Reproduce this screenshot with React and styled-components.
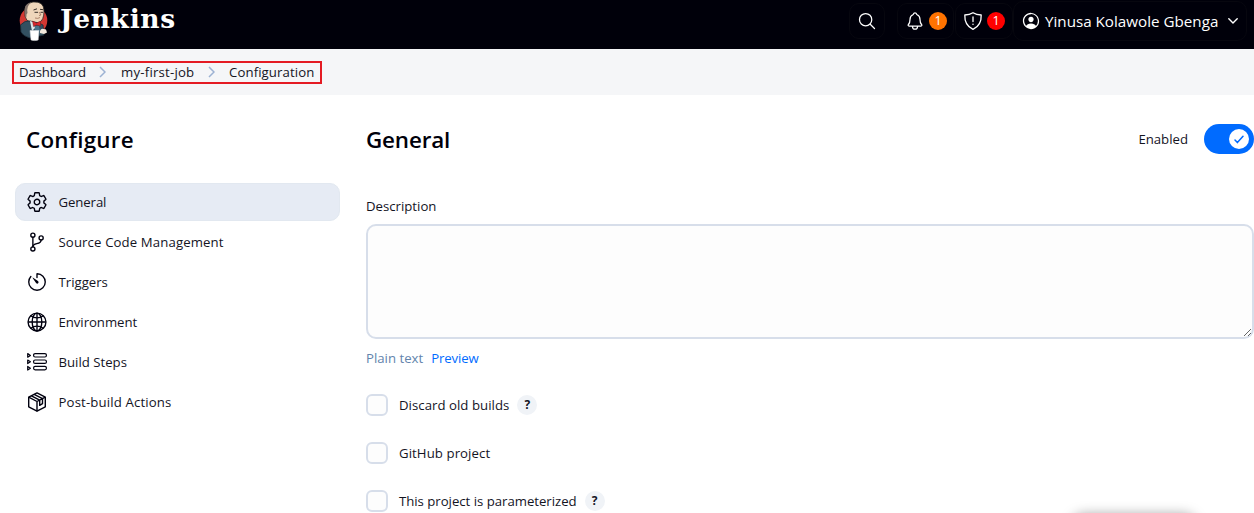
import React from "react";
import styled, { createGlobalStyle } from "styled-components";
import {
  IoSearchOutline,
  IoNotificationsOutline,
  IoPersonCircleOutline,
  IoSettingsOutline,
  IoGitBranchOutline,
  IoTimerOutline,
  IoGlobeOutline,
} from "react-icons/io5";

const GlobalStyle = createGlobalStyle`
  *, *::before, *::after { box-sizing: border-box; }
  body {
    margin: 0;
    background: #fff;
    color: #14141f;
    font-family: "Open Sans", "Noto Sans", sans-serif;
    font-size: 13.2px;
    overflow: hidden;
  }
  svg { display: block; flex: none; }
`;

const Page = styled.div`
  position: relative;
  height: 513px;
  overflow: hidden;
  display: flex;
  flex-direction: column;
`;

const Label = styled.span`
  white-space: nowrap;
  line-height: 20px;
  letter-spacing: ${(p) => p.$track || 0}px;
`;

const Header = styled.header`
  height: 49px;
  flex: none;
  display: flex;
  align-items: flex-start;
  padding-left: 18px;
  background: #00000a;
  color: #fff;
`;

const Brand = styled.div`
  display: flex;
  gap: 11px;
  flex: 1;
`;

const Wordmark = styled.span`
  font-family: "DejaVu Serif", serif;
  font-weight: 700;
  font-size: 26.5px;
  line-height: 38px;
  letter-spacing: ${(p) => p.$track}px;
`;

const HeaderButton = styled.button`
  display: flex;
  align-items: center;
  width: ${(p) => p.$width}px;
  height: ${(p) => p.$height || 36}px;
  margin: ${(p) => p.$margin};
  padding: 0 0 0 ${(p) => p.$pad}px;
  gap: ${(p) => p.$gap || 0}px;
  flex: none;
  border: 1px solid #07070f;
  border-radius: 10px;
  background: transparent;
  color: #fff;
  font: inherit;
`;

const UserName = styled(Label)`
  margin-right: 6px;
  font-size: 15.2px;
`;

const Badge = styled.span`
  width: 18px;
  height: 18px;
  border-radius: 50%;
  background: ${(p) => p.$color};
  color: #fff;
  font-size: 12.5px;
  line-height: 18px;
  text-align: center;
`;

const BreadcrumbBar = styled.nav`
  height: 46px;
  flex: none;
  padding: 12px 0 0 12px;
  background: #f5f6f8;
`;

const Breadcrumbs = styled.div`
  display: flex;
  align-items: center;
  width: 310px;
  height: 23px;
  padding: 0 0 2px 5px;
  border: 2px solid #e41b23;
`;

const Crumb = styled(Label)`
  width: ${(p) => p.$width}px;
`;

const CrumbArrow = styled.svg`
  margin-right: ${(p) => p.$after}px;
`;

const Body = styled.div`
  display: flex;
  flex: 1;
  min-height: 0;
  overflow: hidden;
  padding-left: 15px;
  gap: 26px;
`;

const Sidebar = styled.aside`
  width: 325px;
  flex: none;
`;

const Title = styled.h1`
  margin: 0;
  padding: 1px 0 0 ${(p) => p.$inset || 0}px;
  color: #00000a;
  font-size: 22.4px;
  font-weight: 600;
  line-height: 30px;
  letter-spacing: ${(p) => p.$track || 0}px;
`;

const SidebarHead = styled.div`
  padding-top: 29px;
  height: 88px;
`;

const TaskList = styled.div`
  display: flex;
  flex-direction: column;
  gap: 2px;
`;

const Task = styled.a`
  display: flex;
  align-items: center;
  gap: 10.5px;
  height: 38px;
  padding-left: 10px;
  border-radius: 10px;
  border: 1px solid ${(p) => (p.$active ? "#e2e8f0" : "transparent")};
  background: ${(p) => (p.$active ? "#e6ebf4" : "transparent")};
`;

const TaskIcon = styled.span`
  display: flex;
  align-items: center;
  justify-content: center;
  width: 22px;
  height: 22px;
  color: #00000f;
`;

const Content = styled.main`
  flex: 1;
  min-width: 0;
  display: flex;
  flex-direction: column;
  align-items: stretch;
`;

const ContentHead = styled.div`
  display: flex;
  align-items: center;
  height: 30px;
  flex: none;
  margin-top: 29px;
`;

const EnabledLabel = styled(Label)`
  margin: 0 16px 0 auto;
`;

const Toggle = styled.span`
  display: flex;
  align-items: center;
  justify-content: flex-end;
  width: 50px;
  height: 30px;
  padding-right: 5px;
  border-radius: 15px;
  background: #006bff;
`;

const Knob = styled.span`
  display: flex;
  align-items: center;
  justify-content: center;
  width: 20px;
  height: 20px;
  border-radius: 50%;
  background: #fff;
`;

const FieldLabel = styled(Label)`
  margin-top: 42px;
  margin-bottom: 8px;
`;

const Description = styled.textarea`
  display: block;
  width: 100%;
  height: 115px;
  flex: none;
  border: 2px solid #d7deea;
  border-radius: 10px;
  background: #fdfdfd;
  resize: vertical;
`;

const Formats = styled.div`
  display: flex;
  gap: 8px;
  margin-top: 9px;
  color: #6384ad;
`;

const PreviewLink = styled(Label)`
  color: #006bff;
`;

const Options = styled.div`
  display: flex;
  flex-direction: column;
  gap: 26px;
  margin-top: 26px;
`;

const Option = styled.div`
  display: flex;
  align-items: center;
  height: 22px;
`;

const Checkbox = styled.span`
  width: 22px;
  height: 22px;
  margin-right: 11px;
  border: 2px solid #d7deea;
  border-radius: 6px;
  background: #fdfdfd;
`;

const Help = styled.span`
  width: 20px;
  height: 20px;
  margin-left: 8px;
  border-radius: 50%;
  background: #f0f3f7;
  font-size: 12px;
  font-weight: 700;
  line-height: 20px;
  text-align: center;
`;

const FloatingBar = styled.div`
  position: absolute;
  left: 1073px;
  bottom: -32px;
  width: 122px;
  height: 30px;
  border-radius: 10px;
  box-shadow: 0 0 13px rgba(0, 0, 0, 0.4);
`;

const Butler = () => (
  <svg width="31" height="42" viewBox="0 0 31 42">
    <circle cx="15.5" cy="20.5" r="13.8" fill="#d33833" />
    <path d="M7 16 Q5 3 15 2 Q26 1 26 11 Q26 20 21 23 L12 22 Q8 21 7 16Z" fill="#efd6bb" stroke="#2d2926" strokeWidth=".8" />
    <path d="M7 13 Q5 4 13 2.5 Q8 7 9.5 13 Q8 14 8.5 17 L7 16Z" fill="#81726a" />
    <path d="M15.5 10 l3.5-1.2 M22 9.3 l3 .4 M16.5 12.3 h3.5 M22.5 12.3 h2.5" stroke="#39302b" strokeWidth="1" fill="none" />
    <path d="M21 12 l2 3 -2 .5 M17 18 q3 1 5-.5" stroke="#9c6e58" strokeWidth=".8" fill="none" />
    <path d="M2.5 25 Q7 20 12 21 L21 23 L25 25 L26 35 L12 38 Q5 36 3 32Z" fill="#335061" stroke="#1d2d38" strokeWidth=".8" />
    <path d="M12 21 L15 22 L17 28 L14 31Z" fill="#dfe7eb" />
    <path d="M14.5 21 l4 2 4-2 v5 l-4-1 -3 1.5Z" fill="#d9272e" stroke="#791c20" strokeWidth=".5" />
    <path d="M17 26 l4 0 1 5 -5 0Z" fill="#49728b" />
    <path d="M12 30.5 h9 l-.8 9.5 q-3.5 1.2-7.2 0Z" fill="#fff" stroke="#dadde0" strokeWidth=".5" />
    <path d="M22 31 q1-3 4-2 l2 .5 1 3 -3 1.5 -4-1Z" fill="#f1e7dc" />
  </svg>
);

const ShieldIcon = () => (
  <svg width="20" height="20" viewBox="0 0 20 20" fill="none" stroke="currentColor" strokeWidth="1.3" strokeLinecap="round" strokeLinejoin="round">
    <path d="M10 1.7 C7.5 3.3 4.8 3.9 1.8 4 C1.5 11 4 15.6 10 18.4 C16 15.6 18.5 11 18.2 4 C15.2 3.9 12.5 3.3 10 1.7Z" />
    <path d="M10 6v4.6M10 13.2v.2" />
  </svg>
);

const ChevronDown = () => (
  <svg width="10" height="6" viewBox="0 0 10 6" fill="none" stroke="currentColor" strokeWidth="1.4" strokeLinecap="round" strokeLinejoin="round">
    <path d="M.8.8 5 5 9.2.8" />
  </svg>
);

const StepsIcon = () => (
  <svg width="20" height="20" viewBox="0 0 20 20" fill="none" stroke="currentColor" strokeWidth="1.2" strokeLinejoin="round">
    {[1.6, 8, 14.4].map((y) => (
      <g key={y}>
        <path d={`M.7 ${y} L3.4 ${y + 1.8} L.7 ${y + 3.6}Z`} />
        <rect x="6.6" y={y} width="12.8" height="3.4" rx="1.5" />
      </g>
    ))}
  </svg>
);

const PackageIcon = () => (
  <svg width="20" height="20" viewBox="0 0 20 20" fill="none" stroke="currentColor" strokeWidth="1.4" strokeLinejoin="round">
    <path d="M10 .9 18.3 5.2v9.6L10 19.2 1.7 14.8V5.2Z" />
    <path d="M1.7 5.2 10 9.5l8.3-4.3M10 9.5v9.7M4.4 3.9l8.3 4.2M7.2 2.4l8.3 4.2M12.7 8.2v5.2l2.8-1.7V6.7" />
  </svg>
);

const tasks = [
  { name: "General", icon: <IoSettingsOutline size={22} />, track: -0.1, active: true },
  { name: "Source Code Management", icon: <IoGitBranchOutline size={22} />, track: 0.12 },
  { name: "Triggers", icon: <IoTimerOutline size={22} />, track: 0 },
  { name: "Environment", icon: <IoGlobeOutline size={22} />, track: -0.05 },
  { name: "Build Steps", icon: <StepsIcon />, track: 0 },
  { name: "Post-build Actions", icon: <PackageIcon />, track: 0.14 },
];

const options = [
  { name: "Discard old builds", track: 0.04, help: true },
  { name: "GitHub project", track: 0.08 },
  { name: "This project is parameterized", track: -0.02, help: true },
];

const Separator = ({ after }) => (
  <CrumbArrow $after={after} width="7" height="12" viewBox="0 0 7 12" fill="none" stroke="#9db2d3" strokeWidth="1.5">
    <path d="M1 1l5 5-5 5" />
  </CrumbArrow>
);

export default function App() {
  return (
    <Page>
      <GlobalStyle />
      <Header>
        <Brand>
          <Butler />
          <Wordmark $track={0.65}>Jenkins</Wordmark>
        </Brand>
        <HeaderButton $width={36} $margin="3px 12px 0 0" $pad={7}>
          <IoSearchOutline size={20} />
        </HeaderButton>
        <HeaderButton $width={57} $margin="3px 1px 0 0" $pad={7} $gap={4}>
          <IoNotificationsOutline size={20} />
          <Badge $color="#ff7300">1</Badge>
        </HeaderButton>
        <HeaderButton $width={58} $margin="3px 0 0 0" $pad={7} $gap={4}>
          <ShieldIcon />
          <Badge $color="#ff0000">1</Badge>
        </HeaderButton>
        <HeaderButton $width={234} $height={40} $margin="1px 7px 0 0" $pad={7} $gap={4}>
          <IoPersonCircleOutline size={20} />
          <UserName>Yinusa Kolawole Gbenga</UserName>
          <ChevronDown />
        </HeaderButton>
      </Header>

      <BreadcrumbBar>
        <Breadcrumbs>
          <Crumb $width={80} $track={-0.12}>Dashboard</Crumb>
          <Separator after={15} />
          <Crumb $width={87} $track={0.22}>my-first-job</Crumb>
          <Separator after={14} />
          <Crumb $track={0.1}>Configuration</Crumb>
        </Breadcrumbs>
      </BreadcrumbBar>

      <Body>
        <Sidebar>
          <SidebarHead>
            <Title $inset={11} $track={0.25}>Configure</Title>
          </SidebarHead>
          <TaskList>
            {tasks.map((t) => (
              <Task key={t.name} $active={t.active}>
                <TaskIcon>{t.icon}</TaskIcon>
                <Label $track={t.track}>{t.name}</Label>
              </Task>
            ))}
          </TaskList>
        </Sidebar>

        <Content>
          <ContentHead>
            <Title $track={-0.15}>General</Title>
            <EnabledLabel>Enabled</EnabledLabel>
            <Toggle>
              <Knob>
                <svg width="10" height="9" viewBox="0 0 10 9" fill="none" stroke="#006bff" strokeWidth="1.5" strokeLinecap="round" strokeLinejoin="round">
                  <path d="M1 5l2.4 2.6L9 1.2" />
                </svg>
              </Knob>
            </Toggle>
          </ContentHead>
          <FieldLabel>Description</FieldLabel>
          <Description />
          <Formats>
            <Label>Plain text</Label>
            <PreviewLink $track={-0.1}>Preview</PreviewLink>
          </Formats>
          <Options>
            {options.map((o) => (
              <Option key={o.name}>
                <Checkbox />
                <Label $track={o.track}>{o.name}</Label>
                {o.help && <Help>?</Help>}
              </Option>
            ))}
          </Options>
        </Content>
      </Body>
      <FloatingBar />
    </Page>
  );
}
